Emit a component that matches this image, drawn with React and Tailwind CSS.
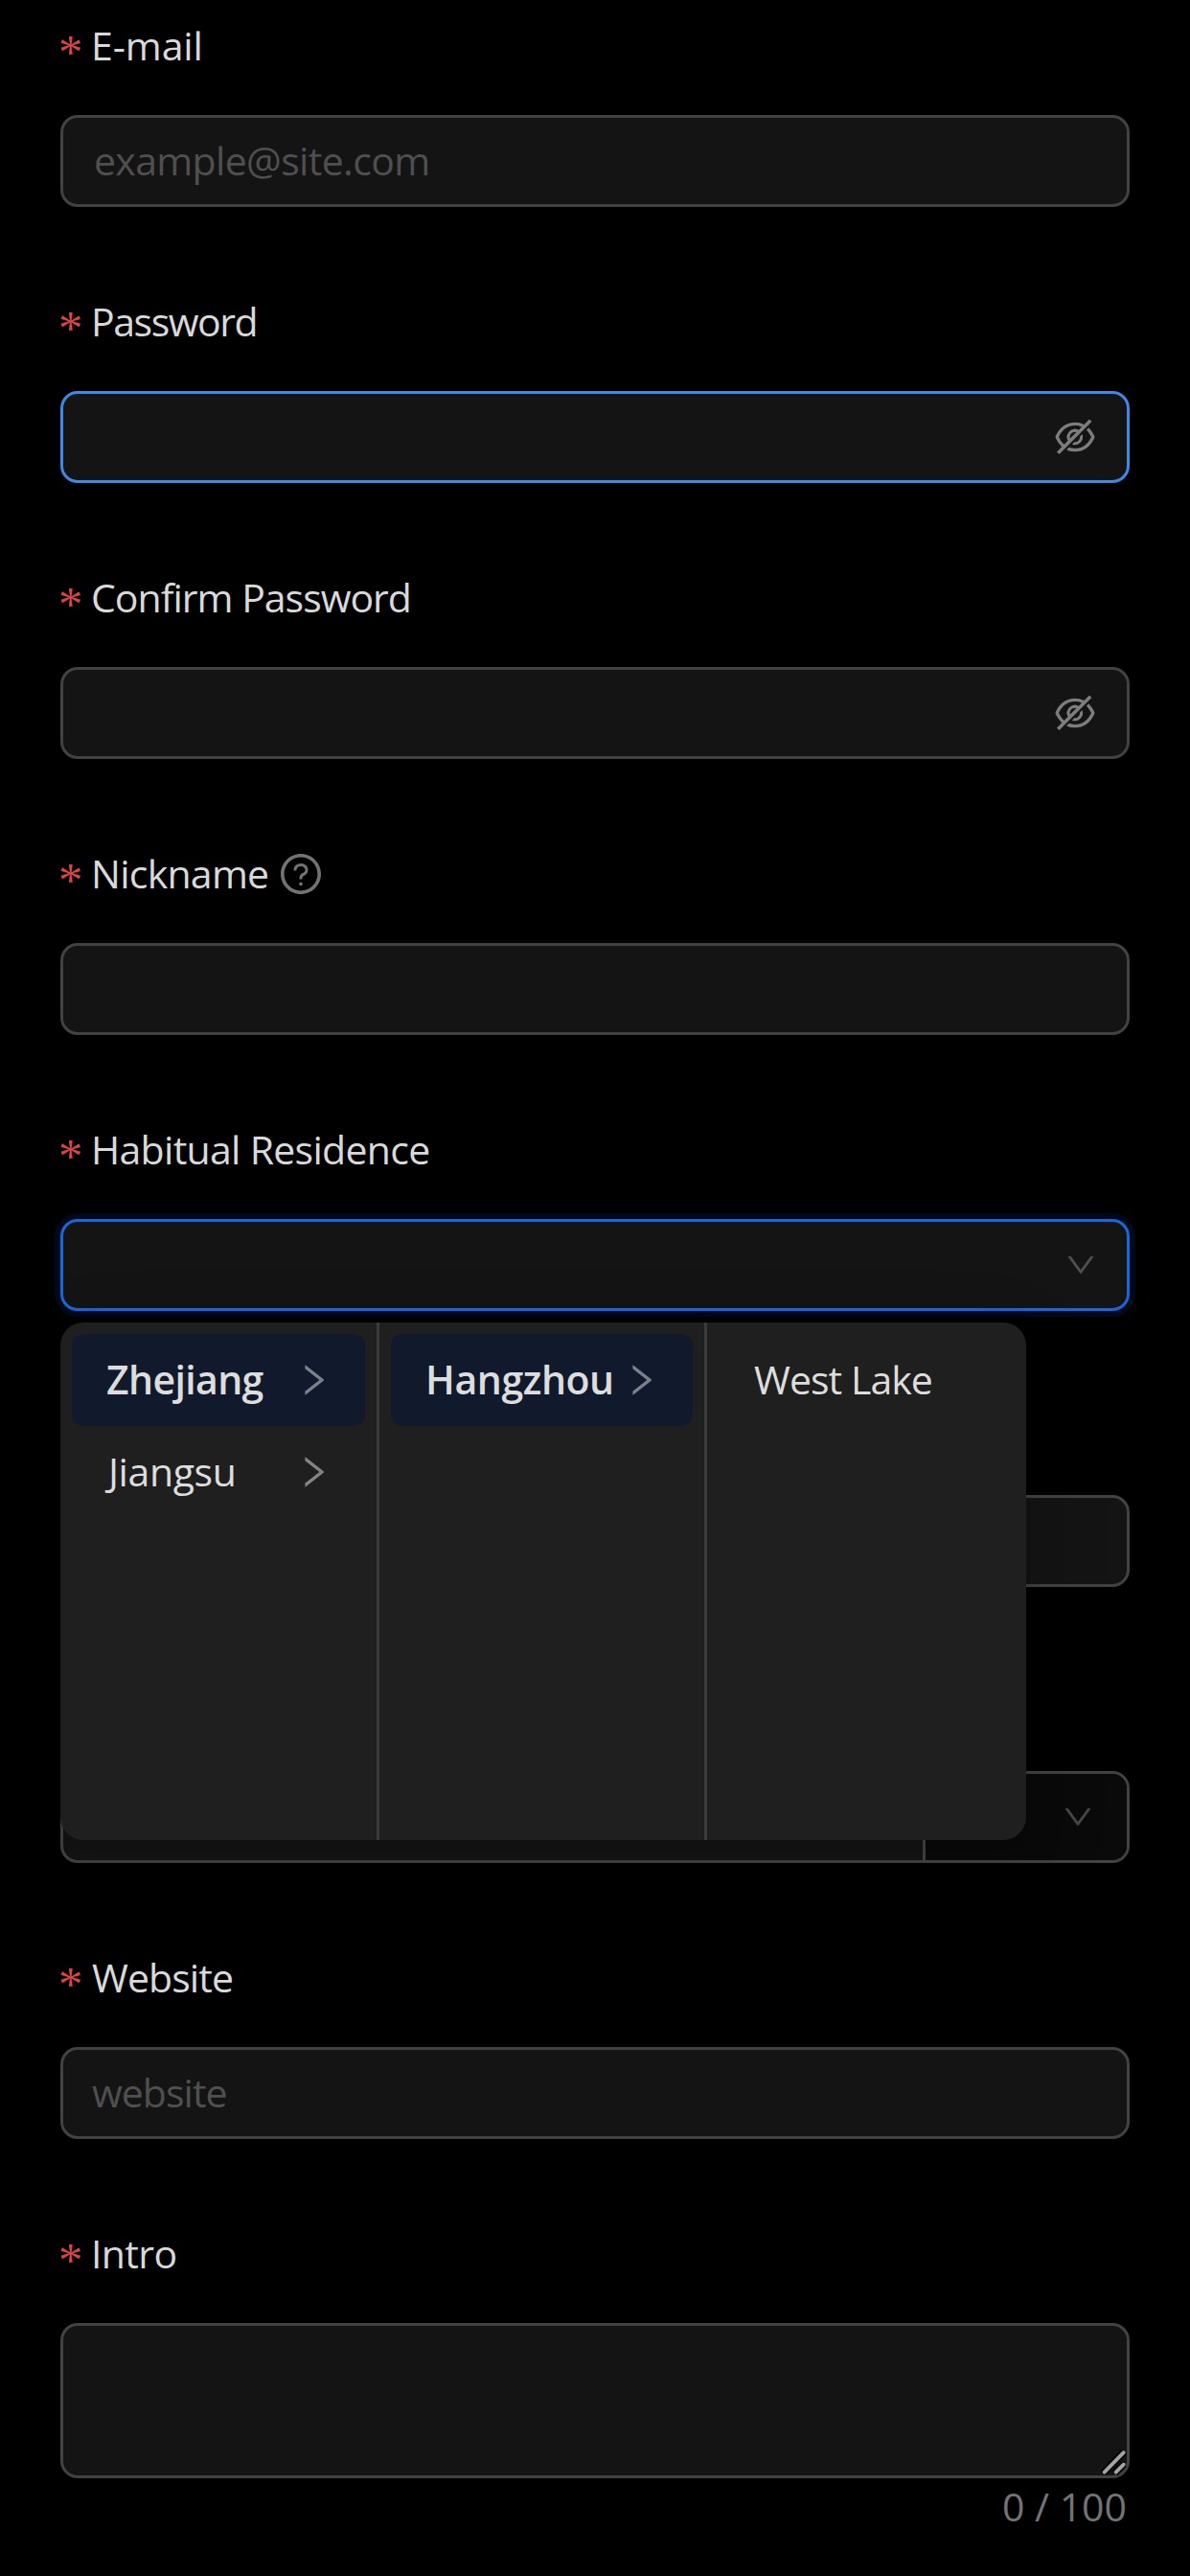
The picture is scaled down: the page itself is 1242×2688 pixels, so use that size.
import {
  AiOutlineDown,
  AiOutlineEyeInvisible,
  AiOutlineQuestionCircle,
  AiOutlineRight,
} from "react-icons/ai";

const BOX = "flex h-24 items-center rounded-[18px] border-[3px] bg-[#141414]";

function Label({ children, className = "", icon }) {
  return (
    <div className="mb-6 flex h-24 items-center">
      <span className="mt-[13px] -ml-[2px] w-[34px] font-['Liberation_Serif',serif] text-[51px] leading-none text-[#dc4446]">
        *
      </span>
      <label className={`pb-[2px] text-[#d9d9d9] ${className}`}>{children}</label>
      {icon}
    </div>
  );
}

function Field({ label, labelClass, icon, children }) {
  return (
    <div className="mb-[72px]">
      {label ? (
        <Label className={labelClass} icon={icon}>
          {label}
        </Label>
      ) : (
        <div className="mb-6 h-24" />
      )}
      {children}
    </div>
  );
}

function PasswordBox({ border }) {
  return (
    <div className={`${BOX} ${border} justify-end pr-[30px]`}>
      <AiOutlineEyeInvisible className="size-12 text-[#7d7d7d]" />
    </div>
  );
}

function Option({ children, active, expandable, className }) {
  return (
    <div
      className={`flex h-24 items-center justify-between rounded-xl pr-[33px] pl-9 text-[#dddddd] ${
        active ? "bg-[#111a2c] font-semibold" : ""
      }`}
    >
      <span className={`pb-[2px] ${className}`}>{children}</span>
      {expandable && (
        <AiOutlineRight
          className={active ? "size-[42px] text-[#7c8089]" : "size-[42px] text-[#848484]"}
        />
      )}
    </div>
  );
}

function CascaderMenu() {
  return (
    <div className="absolute top-[108px] left-0 z-10 flex h-[540px] w-[1008px] overflow-hidden rounded-3xl bg-[#1f1f1f] shadow-[0_18px_48px_0_rgba(0,0,0,0.08),0_9px_18px_-12px_rgba(0,0,0,0.12),0_27px_84px_24px_rgba(0,0,0,0.05)]">
      <div className="w-[333px] border-r-[3px] border-[#3a3a3a] p-3">
        <Option active expandable className="tracking-[-0.63px]">
          Zhejiang
        </Option>
        <Option expandable className="ml-[2px] tracking-[-0.4px]">
          Jiangsu
        </Option>
      </div>
      <div className="w-[342px] border-r-[3px] border-[#3a3a3a] p-3">
        <Option active expandable className="tracking-[-0.42px]">
          Hangzhou
        </Option>
      </div>
      <div className="flex-1 p-3">
        <Option className="ml-[1px] tracking-[-0.95px]">West Lake</Option>
      </div>
    </div>
  );
}

export default function App() {
  return (
    <div className="h-[2688px] w-[1242px] overflow-hidden bg-black px-[63px] font-['Open_Sans','Noto_Sans',sans-serif] text-[41px] leading-[66px] whitespace-nowrap">
      <Field label="E-mail" labelClass="tracking-[-0.1px]">
        <div className={`${BOX} border-[#424242] pb-[2px] pl-8 tracking-[-0.66px] text-[#4f4f4f]`}>
          example@site.com
        </div>
      </Field>

      <Field label="Password" labelClass="tracking-[-1.45px]">
        <PasswordBox border="border-[#3c89e8]" />
      </Field>

      <Field label="Confirm Password" labelClass="tracking-[-1px]">
        <PasswordBox border="border-[#424242]" />
      </Field>

      <Field
        label="Nickname"
        labelClass="tracking-[-0.74px]"
        icon={<AiOutlineQuestionCircle className="ml-[10px] size-12 text-[#737373]" />}
      >
        <div className={`${BOX} border-[#424242]`} />
      </Field>

      <Field label="Habitual Residence" labelClass="tracking-[-0.7px]">
        <div className="relative">
          <div
            className={`${BOX} justify-end border-[#1668dc] pr-[30px] shadow-[0_0_0_6px_#00091b]`}
          >
            <AiOutlineDown className="size-9 text-[#4f4f4f]" />
          </div>
          <CascaderMenu />
        </div>
      </Field>

      <Field>
        <div className={`${BOX} border-[#424242]`} />
      </Field>

      <Field>
        <div className="flex h-24 overflow-hidden rounded-[18px] border-[3px] border-[#424242] bg-[#141414]">
          <div className="flex-1" />
          <div className="flex w-[213px] items-center justify-end border-l-[3px] border-[#424242] bg-[#0a0a0a] pr-[33px]">
            <AiOutlineDown className="size-9 text-[#474747]" />
          </div>
        </div>
      </Field>

      <Field label="Website" labelClass="ml-[1px] tracking-[-0.93px]">
        <div className={`${BOX} border-[#424242] pb-[2px] pl-[30px] tracking-[-0.97px] text-[#4f4f4f]`}>
          website
        </div>
      </Field>

      <Field label="Intro" labelClass="tracking-[-0.62px]">
        <div className="flex h-[162px] items-end justify-end rounded-[18px] border-[3px] border-[#424242] bg-[#141414]">
          <svg className="-mb-px size-7" viewBox="0 0 28 28" fill="none">
            <path
              d="M3.700 24.700 25 2.700M15.700 24.700 25 15.200"
              stroke="#050505"
              strokeWidth="7.500"
            />
            <path
              d="M4.700 23.700 24.700 3.200M16.700 23.700 24.700 15.700"
              stroke="#a3a3a3"
              strokeWidth="3.800"
              strokeLinecap="round"
            />
          </svg>
        </div>
        <div className="flex h-[60px] items-center justify-end pr-[3px] pb-[2px] text-[#737373]">
          0 / 100
        </div>
      </Field>
    </div>
  );
}
